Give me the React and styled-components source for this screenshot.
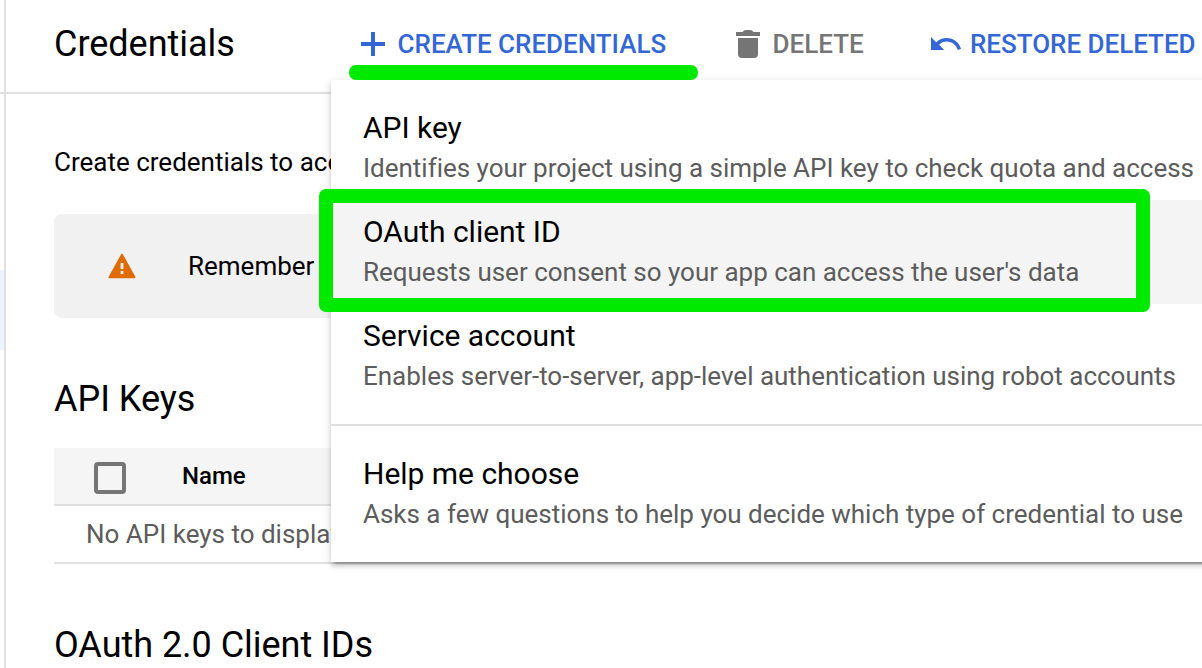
import React from 'react';
import styled, { createGlobalStyle } from 'styled-components';

const GlobalStyle = createGlobalStyle`
  *, *::before, *::after { box-sizing: border-box; }
  body {
    margin: 0;
    background: #fff;
    color: #000;
    font-family: Roboto, "Liberation Sans", sans-serif;
    overflow: hidden;
  }
`;

const Page = styled.div`
  position: relative;
  display: grid;
  grid-template-columns: 6px 1fr;
  width: 1202px;
  height: 668px;
  overflow: hidden;
  background: #fff;
`;

const SideNav = styled.nav`
  display: flex;
  flex-direction: column;
  border-right: 2px solid #e0e0e0;
`;

const SideNavTop = styled.div`
  height: 94px;
  border-bottom: 2px solid #e0e0e0;
`;

const SideNavCurrent = styled.div`
  margin-top: 176px;
  height: 80px;
  background: #edf4fe;
`;

const Main = styled.main`
  display: flex;
  flex-direction: column;
  min-width: 0;
`;

const Header = styled.header`
  display: grid;
  grid-template-columns: 307px 1fr;
  align-items: center;
  height: 94px;
  padding: 0 0 4px 48px;
  border-bottom: 2px solid #e0e0e0;
`;

const PageTitle = styled.h1`
  margin: 0;
  font-size: 36px;
  font-weight: 400;
  line-height: 48px;
  letter-spacing: -0.03px;
`;

const Toolbar = styled.div`
  display: grid;
  grid-template-columns: 375px 195px auto;
  align-items: center;
`;

const ToolbarButton = styled.button`
  display: flex;
  align-items: center;
  gap: ${({ $gap = 12.6 }) => $gap}px;
  padding: 0;
  border: 0;
  background: none;
  color: ${({ $muted }) => ($muted ? '#757575' : '#3367d6')};
  font: 500 26px/40px Roboto, "Liberation Sans", sans-serif;
  letter-spacing: -0.02px;
  white-space: nowrap;
  text-align: left;

  svg { flex: none; display: block; }
`;

const Content = styled.div`
  display: flex;
  flex-direction: column;
  padding: 48px 0 0 48px;
`;

const Intro = styled.p`
  margin: 0 0 32px;
  font-size: 26px;
  line-height: 40px;
  white-space: nowrap;
`;

const Notice = styled.section`
  display: flex;
  align-items: center;
  gap: 52px;
  height: 104px;
  padding-left: 54px;
  border-radius: 8px 0 0 8px;
  background: #f1f1f1;
  font-size: 26px;
  line-height: 40px;
  white-space: nowrap;
`;

const SectionTitle = styled.h2`
  margin: 57px 0 0;
  font-size: 36px;
  font-weight: 400;
  line-height: 48px;
  letter-spacing: -0.03px;
`;

const Table = styled.div`
  margin-top: 25px;
`;

const TableHead = styled.div`
  display: flex;
  align-items: center;
  gap: 56px;
  height: 58px;
  padding-left: 40px;
  border-bottom: 2px solid #e0e0e0;
  background: #f5f5f5;
  font-size: 24px;
  font-weight: 500;
`;

const Checkbox = styled.span`
  width: 32px;
  height: 32px;
  margin-top: 4px;
  border: 4px solid #757575;
  border-radius: 4px;
`;

const EmptyRow = styled.div`
  height: 58px;
  padding-left: 32px;
  border-bottom: 2px solid #e0e0e0;
  color: #5c5c5c;
  font-size: 26px;
  line-height: 56px;
  white-space: nowrap;
`;

const Menu = styled.div`
  position: absolute;
  top: 80px;
  left: 331px;
  width: 960px;
  padding: 16px 0;
  background: #fff;
  box-shadow:
    0 6px 2px -4px rgba(0, 0, 0, 0.2),
    0 4px 4px rgba(0, 0, 0, 0.14),
    0 2px 10px rgba(0, 0, 0, 0.12);
`;

const MenuItem = styled.div`
  height: 104px;
  padding: 12px 32px;
  background: ${({ $active }) => ($active ? '#f4f4f4' : 'transparent')};
  line-height: 40px;
  white-space: nowrap;
`;

const ItemTitle = styled.div`
  font-size: 30px;
  letter-spacing: -0.02px;
`;

const ItemText = styled.div`
  color: #5c5c5c;
  font-size: 26px;
  letter-spacing: -0.012px;
  font-variant-ligatures: common-ligatures;
`;

const Divider = styled.div`
  height: 2px;
  margin: 16px 0;
  background: #e0e0e0;
`;

const Underline = styled.div`
  position: absolute;
  top: 65px;
  left: 349px;
  width: 349px;
  height: 14.6px;
  border-radius: 7px;
  background: #00ea00;
`;

const Highlight = styled.div`
  position: absolute;
  top: 189px;
  left: 319px;
  width: 831px;
  height: 122.6px;
  border: 14px solid #00ea00;
  border-radius: 7px;
`;

const PlusIcon = () => (
  <svg width="24" height="24" viewBox="0 0 24 24" fill="currentColor">
    <path d="M10 0h4v10h10v4H14v10h-4V14H0v-4h10z" />
  </svg>
);

const TrashIcon = () => (
  <svg width="24" height="28" viewBox="0 0 24 28" fill="currentColor">
    <path d="M0 2h6.500q1.500-2 3-2h5q1.500 0 3 2H24v4H0z" />
    <path d="M2 8h20v16q0 4-4 4H6q-4 0-4-4z" />
  </svg>
);

const UndoIcon = () => (
  <svg width="30" height="14" viewBox="0 0 30 14" fill="currentColor">
    <path d="M0 0l5.200 5.200C8.300 2.400 11.800 1 15.800 1c6.600 0 12.200 4.300 14.200 10.800l-3.200 1.200C25.200 8 21 4.500 15.800 4.500c-3 0-5.600 1.200-7.600 3.200L13.200 13H0z" />
  </svg>
);

const WarningIcon = () => (
  <svg width="28" height="26" viewBox="0 0 28 26">
    <path d="M14 1.800L26.500 24.200H1.500z" fill="#de6c00" stroke="#de6c00" strokeWidth="2" strokeLinejoin="round" />
    <path d="M12.600 10h2.800v6h-2.800zM12.600 18h2.800v3h-2.800z" fill="#f1f1f1" />
  </svg>
);

const MENU_ITEMS = [
  { title: 'API key', text: 'Identifies your project using a simple API key to check quota and access' },
  { title: 'OAuth client ID', text: "Requests user consent so your app can access the user's data", active: true },
  { title: 'Service account', text: 'Enables server-to-server, app-level authentication using robot accounts' },
];

const Entry = ({ title, text, active }) => (
  <MenuItem $active={active}>
    <ItemTitle>{title}</ItemTitle>
    <ItemText>{text}</ItemText>
  </MenuItem>
);

export default function App() {
  return (
    <Page>
      <GlobalStyle />
      <SideNav>
        <SideNavTop />
        <SideNavCurrent />
      </SideNav>
      <Main>
        <Header>
          <PageTitle>Credentials</PageTitle>
          <Toolbar>
            <ToolbarButton><PlusIcon />CREATE CREDENTIALS</ToolbarButton>
            <ToolbarButton $muted><TrashIcon />DELETE</ToolbarButton>
            <ToolbarButton $gap={9}><UndoIcon />RESTORE DELETED</ToolbarButton>
          </Toolbar>
        </Header>
        <Content>
          <Intro>Create credentials to acc</Intro>
          <Notice><WarningIcon />Remember</Notice>
          <SectionTitle>API Keys</SectionTitle>
          <Table>
            <TableHead><Checkbox />Name</TableHead>
            <EmptyRow>No API keys to display</EmptyRow>
          </Table>
          <SectionTitle>OAuth 2.0 Client IDs</SectionTitle>
        </Content>
      </Main>
      <Menu>
        {MENU_ITEMS.map((item) => <Entry key={item.title} {...item} />)}
        <Divider />
        <Entry title="Help me choose" text="Asks a few questions to help you decide which type of credential to use" />
      </Menu>
      <Underline />
      <Highlight />
    </Page>
  );
}
